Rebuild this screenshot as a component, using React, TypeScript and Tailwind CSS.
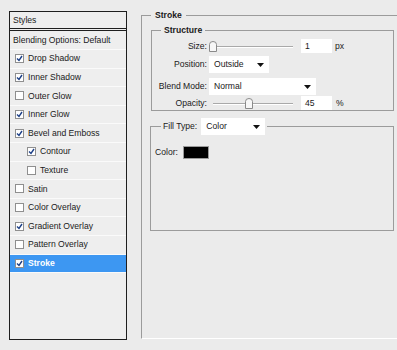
import React from "react";

type Layer = {
  name: string;
  checked: boolean;
  indent?: boolean;
  active?: boolean;
};

const layers: Layer[] = [
  { name: "Drop Shadow", checked: true },
  { name: "Inner Shadow", checked: true },
  { name: "Outer Glow", checked: false },
  { name: "Inner Glow", checked: true },
  { name: "Bevel and Emboss", checked: true },
  { name: "Contour", checked: true, indent: true },
  { name: "Texture", checked: false, indent: true },
  { name: "Satin", checked: false },
  { name: "Color Overlay", checked: false },
  { name: "Gradient Overlay", checked: true },
  { name: "Pattern Overlay", checked: false },
  { name: "Stroke", checked: true, active: true },
];

function CheckBox({ checked }: { checked: boolean }) {
  return (
    <span className="flex h-[9px] w-[9px] shrink-0 items-center justify-center border border-[#8f8f8f] bg-white">
      {checked ? (
        <svg width="7" height="7" viewBox="0 0 7 7">
          <path d="M1 3.5 L3 5.5 L6 1" fill="none" stroke="#1c3f86" strokeWidth="1.4" />
        </svg>
      ) : null}
    </span>
  );
}

function Slider({ at }: { at: number }) {
  return (
    <div className="relative h-[13px] w-[84px]">
      <div className="absolute left-[4px] right-0 top-[6px] h-[2px] border-t border-[#a9a9a9] border-b border-b-white" />
      <svg
        className="absolute top-[1px]"
        style={{ left: at }}
        width="8"
        height="11"
        viewBox="0 0 8 11"
      >
        <path
          d="M0.5 10.5 V3.5 Q0.5 0.5 4 0.5 Q7.5 0.5 7.5 3.5 V10.5 Z"
          fill="#f7f7f7"
          stroke="#8a8a8a"
        />
      </svg>
    </div>
  );
}

function Dropdown({ value, width }: { value: string; width: string }) {
  return (
    <div className={`flex h-[17px] shrink-0 items-center justify-between bg-white pl-[5px] pr-[5px] ${width}`}>
      <span>{value}</span>
      <svg width="7" height="4" viewBox="0 0 7 4">
        <path d="M0 0 H7 L3.5 4 Z" fill="#111" />
      </svg>
    </div>
  );
}

function NumberBox({ value }: { value: string }) {
  return (
    <div className="flex h-[14px] w-[31px] items-center bg-white pl-[4px]">{value}</div>
  );
}

export default function App() {
  return (
    <div
      className="flex h-[350px] w-[397px] overflow-hidden bg-[#ebebeb] pl-[9px] pt-[11px] text-[8.6px] text-[#1a1a1a]"
      style={{ fontFamily: '"Liberation Sans", Arial, sans-serif' }}
    >
      {/* styles list */}
      <div className="flex h-[329px] w-[118px] shrink-0 flex-col border border-[#1e1e1e] bg-[#eeeeee]">
        <div className="flex h-[19px] items-center border-b-[3px] border-double border-[#1e1e1e] pl-[3px]">
          Styles
        </div>
        <div className="flex h-[19px] items-center border-b border-[#fafafa] pl-[3px]">
          Blending Options: Default
        </div>
        {layers.map((layer) => (
          <div
            key={layer.name}
            className={`flex h-[18.6px] items-center gap-[4px] border-b border-[#fafafa] ${
              layer.indent ? "pl-[17px]" : "pl-[5px]"
            } ${layer.active ? "bg-[#3d97f2] font-bold text-white" : ""}`}
          >
            <CheckBox checked={layer.checked} />
            <span>{layer.name}</span>
          </div>
        ))}
      </div>

      {/* stroke settings */}
      <fieldset className="ml-[14px] mt-[-1px] h-[329px] w-[300px] shrink-0 border-l border-b border-t border-l-[#9b9b9b] border-t-[#9b9b9b] border-b-white pl-[9px] pr-[2px]">
        <legend className="ml-0 px-[4px] font-bold leading-[11px]">Stroke</legend>

        <fieldset className="mt-[4px] h-[86px] w-[243px] border border-[#9b9b9b] pl-[1px]">
          <legend className="ml-[8px] px-[3px] font-bold leading-[11px]">Structure</legend>
          <div className="mt-[3px] flex flex-col">
            <div className="flex h-[14px] items-center">
              <span className="w-[54px] text-right">Size:</span>
              <span className="ml-[2px]">
                <Slider at={0} />
              </span>
              <span className="ml-[8px]">
                <NumberBox value="1" />
              </span>
              <span className="ml-[3px]">px</span>
            </div>
            <div className="mt-[3px] flex h-[17px] items-center">
              <span className="w-[54px] text-right">Position:</span>
              <span className="ml-[2px]">
                <Dropdown value="Outside" width="w-[60px]" />
              </span>
            </div>
            <div className="mt-[5px] flex h-[17px] items-center">
              <span className="w-[54px] text-right">Blend Mode:</span>
              <span className="ml-[2px]">
                <Dropdown value="Normal" width="w-[107px]" />
              </span>
            </div>
            <div className="mt-[1px] flex h-[14px] items-center">
              <span className="w-[54px] text-right">Opacity:</span>
              <span className="ml-[2px]">
                <Slider at={36} />
              </span>
              <span className="ml-[8px]">
                <NumberBox value="45" />
              </span>
              <span className="ml-[4px]">%</span>
            </div>
          </div>
        </fieldset>

        {/* fill type group: header row sits on the top border */}
        <div className="ml-[-1px] mt-[15px] h-[105px] w-[244px] border border-[#9b9b9b] pl-[4px]">
          <div className="ml-[6px] mt-[-9px] flex w-fit items-center gap-[4px] bg-[#ebebeb] px-[2px]">
            <span>Fill Type:</span>
            <Dropdown value="Color" width="w-[64px]" />
          </div>
          <div className="mt-[11px] flex items-center">
            <span>Color:</span>
            <span className="ml-[5px] h-[13px] w-[26px] border border-[#9a9a9a] bg-black" />
          </div>
        </div>
      </fieldset>
    </div>
  );
}
